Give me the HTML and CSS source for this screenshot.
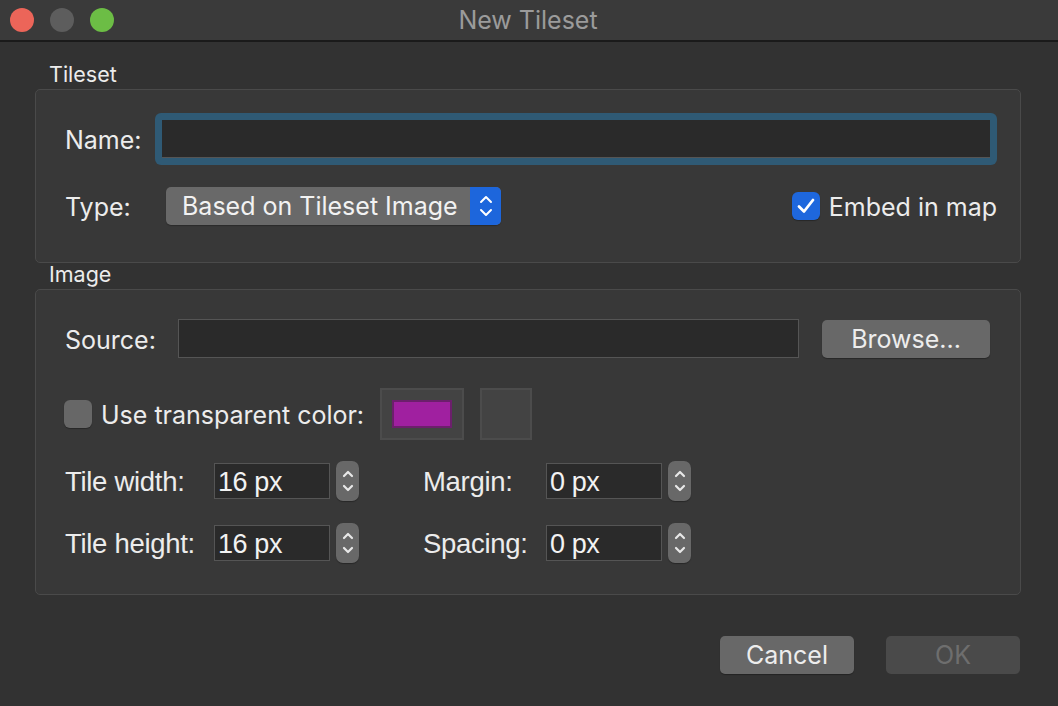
FILE: index.html
```html
<!DOCTYPE html>
<html>
<head>
<meta charset="utf-8">
<link rel="stylesheet" href="styles.css">
</head>
<body>
<div class="window">
  <div class="titlebar">
    <div class="lights">
      <span class="light red"></span>
      <span class="light gray"></span>
      <span class="light green"></span>
    </div>
    <div class="title">New Tileset</div>
    <div></div>
  </div>
  <div class="content">
    <div class="group-title first">Tileset</div>
    <div class="group g1">
      <div class="row name-row">
        <span class="lbl w-name">Name:</span>
        <div class="focus-ring"><div class="text-input"></div></div>
      </div>
      <div class="row type-row">
        <span class="lbl w-type">Type:</span>
        <div class="combo">
          <span class="combo-text">Based on Tileset Image</span>
          <span class="combo-arrows">
            <svg width="14" height="24" viewBox="0 0 14 24"><path d="M2 8 L7 3 L12 8 M2 16 L7 21 L12 16" fill="none" stroke="#fff" stroke-width="2" stroke-linecap="round" stroke-linejoin="round"/></svg>
          </span>
        </div>
        <div class="spacer"></div>
        <div class="check-wrap">
          <span class="checkbox checked">
            <svg width="22" height="20" viewBox="0 0 22 20"><path d="M4 10.5 L9 15.5 L18 4" fill="none" stroke="#fff" stroke-width="2.8" stroke-linecap="round" stroke-linejoin="round"/></svg>
          </span>
          <span class="check-label">Embed in map</span>
        </div>
      </div>
    </div>

    <div class="group-title second">Image</div>
    <div class="group g2">
      <div class="row source-row">
        <span class="lbl w-source">Source:</span>
        <div class="plain-input source-input"></div>
        <div class="button browse">Browse...</div>
      </div>
      <div class="row color-row">
        <span class="checkbox"></span>
        <span class="check-label trans-label">Use transparent color:</span>
        <div class="color-btn"><span class="swatch"></span></div>
        <div class="color-btn small"></div>
      </div>
      <div class="row spin-row r1">
        <span class="lbl w-tile">Tile width:</span>
        <div class="spin"><div class="spin-input">16 px</div><span class="stepper"><svg width="14" height="28" viewBox="0 0 14 28"><path d="M3 9 L7 5 L11 9 M3 19 L7 23 L11 19" fill="none" stroke="#e8e8e8" stroke-width="2.2" stroke-linecap="round" stroke-linejoin="round"/></svg></span></div>
        <span class="lbl w-margin">Margin:</span>
        <div class="spin"><div class="spin-input">0 px</div><span class="stepper"><svg width="14" height="28" viewBox="0 0 14 28"><path d="M3 9 L7 5 L11 9 M3 19 L7 23 L11 19" fill="none" stroke="#e8e8e8" stroke-width="2.2" stroke-linecap="round" stroke-linejoin="round"/></svg></span></div>
      </div>
      <div class="row spin-row r2">
        <span class="lbl w-tile">Tile height:</span>
        <div class="spin"><div class="spin-input">16 px</div><span class="stepper"><svg width="14" height="28" viewBox="0 0 14 28"><path d="M3 9 L7 5 L11 9 M3 19 L7 23 L11 19" fill="none" stroke="#e8e8e8" stroke-width="2.2" stroke-linecap="round" stroke-linejoin="round"/></svg></span></div>
        <span class="lbl w-margin">Spacing:</span>
        <div class="spin"><div class="spin-input">0 px</div><span class="stepper"><svg width="14" height="28" viewBox="0 0 14 28"><path d="M3 9 L7 5 L11 9 M3 19 L7 23 L11 19" fill="none" stroke="#e8e8e8" stroke-width="2.2" stroke-linecap="round" stroke-linejoin="round"/></svg></span></div>
      </div>
    </div>

    <div class="footer">
      <div class="button dlg">Cancel</div>
      <div class="button dlg disabled">OK</div>
    </div>
  </div>
</div>
</body>
</html>
```
FILE: styles.css
```css
* { box-sizing: border-box; }
html, body {
  margin: 0;
  padding: 0;
  width: 1058px;
  height: 706px;
  overflow: hidden;
  background: #323232;
  font-family: Inter, "Noto Sans", "Liberation Sans", sans-serif;
  color: #ececec;
}
.window { width: 1058px; height: 706px; display: flex; flex-direction: column; }

.titlebar {
  height: 42px;
  background: #3a3a3a;
  border-bottom: 2px solid #1a1a1a;
  display: grid;
  grid-template-columns: 1fr auto 1fr;
  align-items: center;
}
.lights { display: flex; gap: 16px; padding-left: 10px; }
.light { width: 24px; height: 24px; border-radius: 50%; display: block; }
.light.red { background: #ec6559; }
.light.gray { background: #5d5d5d; }
.light.green { background: #6cbd45; }
.title { font-size: 25px; color: #9b9b9b; line-height: 40px; margin-right: 2px; }

.content { padding: 0 37px 0 35px; display: flex; flex-direction: column; }

.group-title {
  font-size: 21.5px;
  height: 22px;
  line-height: 22px;
  padding-left: 14px;
  color: #ececec;
  margin-bottom: 4px;
}
.group-title.first { margin-top: 21px; }
.group-title.second { margin-top: 0; }

.group {
  border: 1px solid #4a4a4a;
  border-radius: 5px;
  background: #383838;
  display: flex;
  flex-direction: column;
}
.g1 { height: 174px; padding: 23px 23px 0 29px; gap: 22px; }
.g2 { height: 306px; padding: 29px 30px 0 28px; }

.row { display: flex; align-items: center; }
.lbl { font-size: 25px; color: #ececec; flex: none; white-space: nowrap; padding-top: 2px; }

.w-name { width: 90px; }
.w-type { width: 101px; }
.w-source { width: 114px; padding-left: 1px; }
.w-tile { width: 150px; padding-left: 1px; }
.w-margin { width: 123px; }

.focus-ring {
  flex: 1;
  height: 52px;
  border-radius: 6px;
  background: #2f5a75;
  padding: 7px;
}
.text-input {
  height: 100%;
  background: #2a2a2a;
  border-bottom: 1px solid #555;
}

.combo {
  width: 335px;
  height: 38px;
  background: #696969;
  border-radius: 5px;
  display: flex;
  align-items: stretch;
  box-shadow: 0 1px 1px rgba(0,0,0,0.25);
}
.combo-text {
  flex: 1;
  font-size: 25px;
  line-height: 38px;
  padding-left: 16px;
  color: #f2f2f2;
  white-space: nowrap;
  overflow: hidden;
}
.combo-arrows {
  width: 31px;
  flex: none;
  background: #1d66dc;
  border-radius: 0 5px 5px 0;
  display: flex;
  align-items: center;
  justify-content: center;
}
.spacer { flex: 1; }

.check-wrap { display: flex; align-items: center; gap: 9px; }
.checkbox {
  width: 28px;
  height: 28px;
  border-radius: 6px;
  background: #676767;
  display: flex;
  align-items: center;
  justify-content: center;
  flex: none;
  box-shadow: 0 1px 1px rgba(0,0,0,0.3);
}
.checkbox.checked { background: #1e67dd; }
.check-label { font-size: 25px; color: #ececec; white-space: nowrap; padding-top: 1px; }

.source-row { height: 39px; }
.plain-input {
  background: #2a2a2a;
  border: 1px solid #555;
}
.source-input { flex: 1; height: 39px; }
.button {
  background: #686868;
  border-radius: 5px;
  color: #ededed;
  font-size: 25px;
  display: flex;
  align-items: center;
  justify-content: center;
  box-shadow: 0 1px 1px rgba(0,0,0,0.3);
}
.browse { width: 168px; height: 38px; margin-left: 23px; }

.color-row { height: 52px; margin-top: 30px; }
.trans-label { margin-left: 9px; width: 279px; }
.color-btn {
  width: 84px;
  height: 52px;
  background: #434343;
  border: 2px solid #4c4c4c;
  display: flex;
  align-items: center;
  justify-content: center;
  flex: none;
}
.color-btn.small { width: 52px; margin-left: 16px; }
.swatch {
  width: 60px;
  height: 28px;
  background: #a020a0;
  border: 2px solid #6c1f6c;
  display: block;
}

.spin-row { height: 40px; }
.spin-row.r1 { margin-top: 21px; }
.spin-row.r2 { margin-top: 22px; }
.spin { display: flex; align-items: center; width: 209px; flex: none; }
.spin-input {
  width: 116px;
  height: 36px;
  background: #2a2a2a;
  border: 1px solid #555;
  font-family: "Liberation Sans", Arial, sans-serif;
  font-size: 27px;
  line-height: 36px;
  padding-left: 3px;
  color: #f2f2f2;
  letter-spacing: -0.4px;
}
.stepper {
  width: 23px;
  height: 40px;
  margin-left: 6px;
  border-radius: 7px;
  background: #686868;
  display: flex;
  align-items: center;
  justify-content: center;
  box-shadow: 0 1px 1px rgba(0,0,0,0.3);
}
.r1 .lbl, .r2 .lbl { font-family: "Liberation Sans", Arial, sans-serif; font-size: 27.5px; letter-spacing: -0.3px; }

.footer {
  display: flex;
  justify-content: flex-end;
  gap: 32px;
  margin-top: 41px;
  padding-right: 1px;
}
.dlg { width: 134px; height: 38px; }
.dlg.disabled { background: #4a4a4a; color: #6e6e6e; box-shadow: none; }
```
